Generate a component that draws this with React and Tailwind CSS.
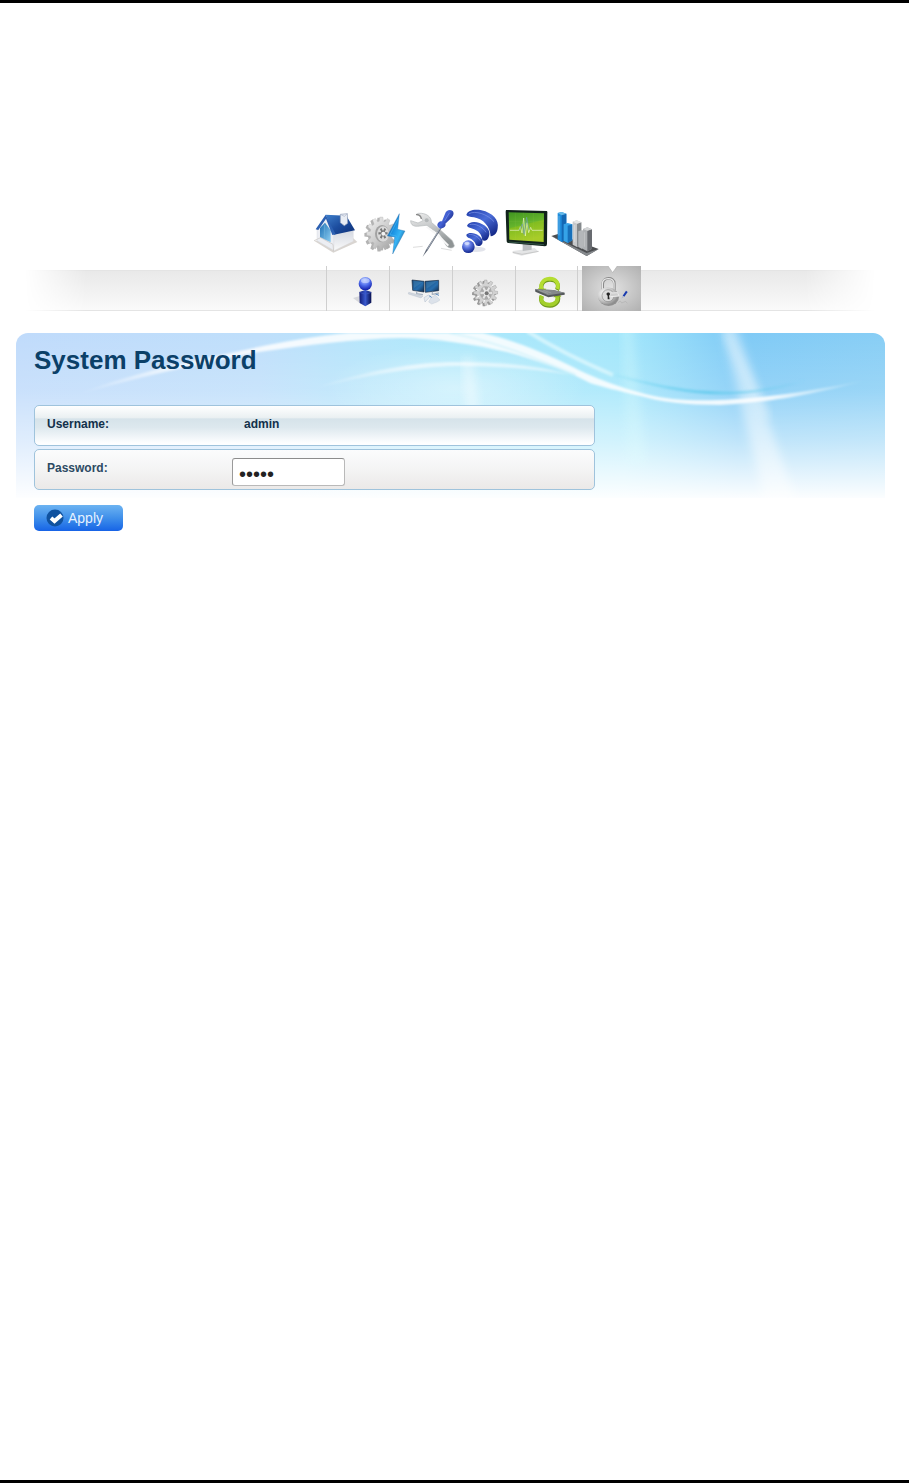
import React, { useState } from "react";

function gearPath(cx, cy, rx, ry, teeth, depth) {
  const points = [];
  for (let i = 0; i < teeth; i++) {
    const step = (Math.PI * 2) / teeth;
    [
      [-0.36, depth],
      [-0.2, 1],
      [0.2, 1],
      [0.36, depth],
    ].forEach(([offset, r]) => {
      const a = (i + offset) * step;
      points.push(`${(cx + Math.cos(a) * rx * r).toFixed(1)} ${(cy + Math.sin(a) * ry * r).toFixed(1)}`);
    });
  }
  return `M${points.join("L")}Z`;
}

function HomeIcon() {
  return (
    <svg viewBox="18 15 144 165" className="h-[55px] w-12" aria-hidden="true">
      <defs>
        <linearGradient id="roof" x1="0" y1="0" x2="1" y2="1">
          <stop offset="0" stopColor="#3f7fcb" />
          <stop offset="0.5" stopColor="#1c4d9f" />
          <stop offset="1" stopColor="#0e2f75" />
        </linearGradient>
        <linearGradient id="door" x1="0" y1="0" x2="1" y2="1">
          <stop offset="0" stopColor="#1c6fb4" />
          <stop offset="1" stopColor="#8fcff2" />
        </linearGradient>
        <linearGradient id="wall" x1="0" y1="0" x2="0" y2="1">
          <stop offset="0" stopColor="#d5d9e2" />
          <stop offset="1" stopColor="#fafafa" />
        </linearGradient>
      </defs>
      <path d="M27 122L85 158L157 126L145 115Z" fill="#d9d5d1" />
      <path d="M36 84L62 52L88 100V152L36 122Z" fill="#eceef3" stroke="#cfd3dc" />
      <path d="M86 100L145 92V124L87 152Z" fill="url(#wall)" stroke="#d4d4da" />
      <path d="M45 84L60 68L77 91V127L45 112Z" fill="url(#door)" />
      <path d="M59 74V118" stroke="#6fb3dd" strokeWidth="2" />
      <path d="M27 122L47 113L84 133L86 154" fill="none" stroke="#c9c4c1" strokeWidth="2" />
      <path d="M62 44L124 47L150 91L87 104Z" fill="url(#roof)" />
      <path d="M62 44L32 88L40 90L63 56L82 105L92 103Z" fill="#2c60b2" />
      <path d="M106 43L127 41L128 70L118 77L106 68Z" fill="#e9edf4" stroke="#8e9bb5" strokeWidth="2" />
      <path d="M106 43L118 49L127 41" fill="none" stroke="#a7b1c5" strokeWidth="2" />
    </svg>
  );
}

function SetupIcon() {
  return (
    <svg viewBox="162 15 144 165" className="h-[55px] w-12" aria-hidden="true">
      <defs>
        <linearGradient id="steel" x1="0" y1="0" x2="1" y2="1">
          <stop offset="0" stopColor="#f3f3f3" />
          <stop offset="0.5" stopColor="#cdcdcd" />
          <stop offset="1" stopColor="#989898" />
        </linearGradient>
        <linearGradient id="bolt" x1="0" y1="0" x2="1" y2="1">
          <stop offset="0" stopColor="#163f78" />
          <stop offset="0.4" stopColor="#1c94e4" />
          <stop offset="0.6" stopColor="#35b4f5" />
          <stop offset="1" stopColor="#143363" />
        </linearGradient>
      </defs>
      <path d={gearPath(222, 104, 44, 51, 12, 0.76)} fill="#b3b3b3" />
      <path d={gearPath(229, 101, 44, 50, 12, 0.76)} fill="url(#steel)" stroke="#b0b0b0" />
      <ellipse cx="231" cy="101" rx="21" ry="26" fill="#a2a2a2" />
      <ellipse cx="234" cy="102" rx="18" ry="23" fill="#dadada" />
      <path d={gearPath(234, 100, 14, 17, 6, 0.5)} fill="#777" />
      <circle cx="235" cy="101" r="6" fill="#f3f3f3" />
      <path d="M283 41L247 108L269 111L263 162L300 93L278 88Z" fill="url(#bolt)" stroke="#246ba6" />
      <path d="M280 56L255 104L274 108L269 138" fill="none" stroke="#45b3f3" strokeWidth="2" />
    </svg>
  );
}

function ToolsIcon() {
  return (
    <svg viewBox="306 15 144 165" className="h-[55px] w-12" aria-hidden="true">
      <defs>
        <linearGradient id="wrench" x1="0" y1="0" x2="0.4" y2="1">
          <stop offset="0" stopColor="#eee" />
          <stop offset="0.5" stopColor="#c4c7c8" />
          <stop offset="1" stopColor="#8f9495" />
        </linearGradient>
        <linearGradient id="grip" x1="0" y1="0" x2="1" y2="0.7">
          <stop offset="0" stopColor="#15268d" />
          <stop offset="0.5" stopColor="#4564d8" />
          <stop offset="1" stopColor="#142278" />
        </linearGradient>
      </defs>
      <path d="M324 142L353 139M408 145L440 151" stroke="#ddd" strokeWidth="3" />
      <path d="M317 62C317 76 327 81 345 78L364 76L404 103L424 137C434 147 446 145 448 137L442 122L407 91L379 67C380 51 364 38 340 40L334 43L347 50L354 62L339 69Z" fill="url(#wrench)" stroke="#b4b8b9" strokeWidth="2" />
      <path d="M333 44C342 43 348 49 349 57" fill="none" stroke="#888" strokeWidth="4" />
      <circle cx="365" cy="61" r="6" fill="#b3b7b8" />
      <path d="M365 80L402 109L430 137" fill="none" stroke="#f7f7f7" strokeWidth="6" />
      <path d="M407 80L364 148L353 170L367 152L411 82Z" fill="#5c6574" />
      <path d="M407 82L366 149" stroke="#c7cfda" strokeWidth="2" />
      <path d="M397 74C399 66 405 62 411 64L420 42C423 31 434 27 442 32C449 38 445 48 438 55L421 71C424 77 418 82 413 84C406 88 396 82 397 74Z" fill="url(#grip)" />
      <path d="M419 62L434 38" stroke="#7d93ea" strokeWidth="2" />
    </svg>
  );
}

function WirelessIcon() {
  return (
    <svg viewBox="15 15 144 165" className="h-[55px] w-12" aria-hidden="true">
      <defs>
        <linearGradient id="wave" x1="0" y1="0" x2="0.8" y2="1">
          <stop offset="0" stopColor="#203da9" />
          <stop offset="0.5" stopColor="#4a6cd8" />
          <stop offset="1" stopColor="#142887" />
        </linearGradient>
        <radialGradient id="ball" cx="0.4" cy="0.3" r="0.7">
          <stop offset="0" stopColor="#bdcaff" />
          <stop offset="0.45" stopColor="#5a73df" />
          <stop offset="1" stopColor="#12278e" />
        </radialGradient>
      </defs>
      <ellipse cx="79" cy="148" rx="28" ry="8" fill="#e2e4eb" />
      <path d="M49 45C53 31 73 27 94 31C128 38 148 61 143 84C142 97 136 107 122 109C120 79 100 57 72 52C60 50 53 50 49 45Z" fill="url(#wave)" />
      <path d="M51 77C56 65 74 63 89 69C112 77 124 96 116 111C113 120 107 124 97 121C96 103 85 91 68 86C59 83 53 82 51 77Z" fill="url(#wave)" />
      <path d="M49 104C55 96 74 97 87 107C99 116 102 130 91 137C83 140 78 137 77 133C74 125 67 119 59 115C52 112 49 109 49 104Z" fill="url(#wave)" />
      <path d="M57 41C76 31 112 42 132 65M59 74C75 69 98 80 108 97M56 104C70 101 86 111 91 122" fill="none" stroke="#7d96ea" strokeWidth="2" />
      <circle cx="55" cy="140" r="19" fill="url(#ball)" />
      <ellipse cx="51" cy="130" rx="8" ry="5" fill="#e1e8ff" opacity="0.7" />
    </svg>
  );
}

function MonitorIcon() {
  return (
    <svg viewBox="159 15 144 165" className="h-[55px] w-12" aria-hidden="true">
      <defs>
        <linearGradient id="screen" x1="0" y1="0" x2="0.3" y2="1">
          <stop offset="0" stopColor="#409521" />
          <stop offset="0.48" stopColor="#65b42c" />
          <stop offset="0.52" stopColor="#82bd20" />
          <stop offset="1" stopColor="#a8cc29" />
        </linearGradient>
      </defs>
      <path d="M188 153L254 144L266 155L215 167L188 160Z" fill="#e4e5e6" />
      <path d="M188 157L216 163L266 154" fill="none" stroke="#b9b9b9" strokeWidth="2" />
      <path d="M218 130L245 134V149L218 153Z" fill="#bbbec0" />
      <path d="M168 30L290 33Q293 34 292 39L291 132Q291 139 285 139L175 129Q170 129 170 124L167 35Z" fill="#11221b" />
      <path d="M176 37L282 40L281 126L178 119Z" fill="url(#screen)" />
      <path d="M177 64H281M177 88H280M196 38V120M221 38V122M250 39V124" stroke="#b9de66" opacity="0.25" />
      <path d="M180 91H207L211 80L216 99L221 54L226 108L231 68L236 98L242 82L246 91H278" fill="none" stroke="#e8f3c4" strokeWidth="2" />
      <path d="M208 91L217 72L222 103L230 52L237 90" fill="none" stroke="#6e9fae" strokeWidth="2" />
      <path d="M176 126L282 134" stroke="#456f5d" strokeWidth="2" />
    </svg>
  );
}

function ChartIcon() {
  return (
    <svg viewBox="303 15 144 165" className="h-[55px] w-12" aria-hidden="true">
      <path d="M304 108L324 102L446 147L410 168Z" fill="#4c4e51" />
      <path d="M304 108L410 159L446 147L410 168Z" fill="#85898d" />
      <path d="M323 39L335 36L349 41V119L335 126L323 118Z" fill="#1f8ddc" />
      <path d="M335 44L349 41V119L335 126Z" fill="#1368b4" />
      <path d="M323 39L335 36L349 41L335 46Z" fill="#65b9e9" />
      <path d="M341 73L353 69L367 73V121L353 129L341 123Z" fill="#35a3e8" />
      <path d="M353 77L367 73V121L353 129Z" fill="#1770ba" />
      <path d="M368 65L380 61L394 67V134L381 141L368 134Z" fill="#c6c8ca" />
      <path d="M381 71L394 67V134L381 141Z" fill="#85898c" />
      <path d="M368 65L380 61L394 67L381 71Z" fill="#e5e5e5" />
      <path d="M385 94L396 90L406 96V141L396 147L385 141Z" fill="#b4b7ba" />
      <path d="M399 87L412 82L426 88V146L412 154L399 147Z" fill="#aeb1b4" />
      <path d="M412 92L426 88V146L412 154Z" fill="#686b70" />
      <path d="M399 87L412 82L426 88L412 92Z" fill="#d4d6d7" />
      <path d="M327 48V106M374 75V126M403 97V140" stroke="#fff" strokeWidth="2" opacity="0.4" />
    </svg>
  );
}

function InfoIcon() {
  return (
    <svg viewBox="21 18 186 135" className="h-[45px] w-full" aria-hidden="true">
      <defs>
        <radialGradient id="head" cx="0.45" cy="0.25" r="0.75">
          <stop offset="0" stopColor="#c4d2ff" />
          <stop offset="0.5" stopColor="#5270ee" />
          <stop offset="1" stopColor="#101da8" />
        </radialGradient>
        <linearGradient id="body" x1="0" y1="0" x2="1" y2="0">
          <stop offset="0" stopColor="#111b74" />
          <stop offset="0.5" stopColor="#3759cf" />
          <stop offset="1" stopColor="#08104e" />
        </linearGradient>
      </defs>
      <path d="M99 114L122 107V131Z" fill="#d6d7db" />
      <path d="M118 96L136 90L154 96V128L136 139L119 129Z" fill="url(#body)" />
      <path d="M119 97L136 103L154 97M136 103V138" fill="none" stroke="#3f5cc8" strokeWidth="2" />
      <circle cx="136" cy="71" r="20" fill="url(#head)" />
      <ellipse cx="136" cy="62" rx="13" ry="7" fill="#c7d6ff" opacity="0.65" />
    </svg>
  );
}

function NetworkIcon() {
  return (
    <svg viewBox="210 18 186 135" className="h-[45px] w-full" aria-hidden="true">
      <defs>
        <linearGradient id="display" x1="0" y1="0" x2="1" y2="1">
          <stop offset="0" stopColor="#174779" />
          <stop offset="0.6" stopColor="#276eae" />
          <stop offset="1" stopColor="#102849" />
        </linearGradient>
      </defs>
      <path d="M276 60L312 64V96L278 91Z" fill="url(#display)" stroke="#1a2a40" strokeWidth="2" />
      <path d="M315 64L356 61V92L316 97Z" fill="url(#display)" stroke="#1a2a40" strokeWidth="2" />
      <path d="M280 62L308 66L282 84ZM318 66L352 63L320 86Z" fill="#4b8ebd" opacity="0.4" />
      <path d="M290 94V101L309 104M337 95V103L357 99" fill="none" stroke="#aab5c2" strokeWidth="4" />
      <path d="M266 97L309 108L303 114L265 102Z" fill="#d1d7df" stroke="#afb8c5" />
      <path d="M312 113L325 105L332 108L315 126Z" fill="#e7ebef" stroke="#91a2b8" />
      <path d="M333 113L346 105L360 120L351 126L335 132L326 126Z" fill="#dce2ea" stroke="#b3c0cc" />
      <path d="M328 108L335 112M347 102L357 106" stroke="#5489c1" strokeWidth="3" />
    </svg>
  );
}

function GearIcon() {
  return (
    <svg viewBox="-81 18 186 135" className="h-[45px] w-full" aria-hidden="true">
      <path d={gearPath(12, 101, 36, 38, 12, 0.75)} fill="#999" />
      <path d={gearPath(17, 98, 36, 38, 12, 0.75)} fill="#d2d2d2" stroke="#858585" />
      <ellipse cx="18" cy="99" rx="18" ry="20" fill="#aaa" />
      <path d={gearPath(19, 99, 19, 20, 6, 0.5)} fill="#e7e7e7" stroke="#888" />
      <circle cx="20" cy="100" r="6" fill="#777" />
      <path d="M-12 88L-5 91M0 70L5 76M38 75L33 80M-10 112L-2 108M11 129L13 120M36 124L31 116" stroke="#fff" strokeWidth="3" />
    </svg>
  );
}

function UpdateIcon() {
  return (
    <svg viewBox="105 18 186 135" className="h-[45px] w-full" aria-hidden="true">
      <path d="M186 97C174 76 186 59 207 59C228 59 236 75 228 90" fill="none" stroke="#6f981a" strokeWidth="12" />
      <path d="M184 93C174 73 186 57 206 56C226 56 235 71 229 87" fill="none" stroke="#b4dd31" strokeWidth="11" />
      <path d="M171 84L196 86L184 104Z" fill="#a5d02a" />
      <path d="M182 108C176 126 188 137 207 137C226 136 236 122 229 105" fill="none" stroke="#6f981a" strokeWidth="13" />
      <path d="M182 107C176 124 187 134 206 134C225 133 233 120 228 106" fill="none" stroke="#a3cf2b" strokeWidth="11" />
      <path d="M217 112L241 110L230 94Z" fill="#93be20" />
      <path d="M162 88L216 90L251 98V104L202 112L163 95Z" fill="#55595b" />
      <path d="M162 88L216 90L251 98L201 106Z" fill="#85898b" />
      <path d="M174 91L201 100M187 91L211 99" stroke="#a5a8a9" strokeWidth="2" />
    </svg>
  );
}

function PasswordIcon() {
  return (
    <svg viewBox="306 18 177 135" className="h-[45px] w-full" aria-hidden="true">
      <defs>
        <radialGradient id="lock" cx="0.35" cy="0.35" r="0.8">
          <stop offset="0" stopColor="#fff" />
          <stop offset="0.55" stopColor="#c4c4c4" />
          <stop offset="1" stopColor="#777" />
        </radialGradient>
      </defs>
      <path d="M384 18H412L398 38Z" fill="#fff" />
      <path d="M384 18L398 38L412 18" fill="none" stroke="#aaa" strokeWidth="2" />
      <path d="M368 94V72C369 50 402 50 403 70V90" fill="none" stroke="#8a8a8a" strokeWidth="8" />
      <path d="M367 94V71C368 51 400 51 402 69V90" fill="none" stroke="#e7e7e7" strokeWidth="4" />
      <ellipse cx="386" cy="111" rx="31" ry="27" fill="#909090" />
      <ellipse cx="383" cy="108" rx="30" ry="26" fill="url(#lock)" />
      <ellipse cx="384" cy="107" rx="18" ry="18" fill="#dcdcdc" stroke="#888" strokeWidth="2" />
      <path d="M382 98C389 95 393 103 387 107L389 118H383V107C379 104 378 100 382 98Z" fill="#242424" />
      <path d="M394 99L413 98L417 108L391 110" fill="#cfcfcf" stroke="#eee" strokeWidth="3" />
      <path d="M428 107L438 92L443 96L433 110Z" fill="#183aaf" />
      <path d="M428 107L424 116L433 110" fill="#adb7cd" />
      <path d="M414 128L421 123L425 129L437 124L442 130" fill="none" stroke="#b0b0b0" strokeWidth="2" />
    </svg>
  );
}

function BannerArt() {
  return (
    <svg viewBox="0 0 869 165" preserveAspectRatio="none" className="absolute inset-x-0 top-0 h-[165px] w-full rounded-t-xl" aria-hidden="true">
      <defs>
        <linearGradient id="sky" x1="0" x2="1" y1="0" y2="0">
          <stop offset="0" stopColor="#c0dbfb" />
          <stop offset="0.28" stopColor="#bfdffb" />
          <stop offset="0.42" stopColor="#b4e6fb" />
          <stop offset="0.5" stopColor="#aee8fb" />
          <stop offset="0.7" stopColor="#a2e6fb" />
          <stop offset="0.76" stopColor="#92daf9" />
          <stop offset="0.83" stopColor="#7fcaf6" />
          <stop offset="1" stopColor="#88cef5" />
        </linearGradient>
        <linearGradient id="fade" x1="0" x2="0" y1="0" y2="1">
          <stop offset="0" stopColor="#fff" stopOpacity="0" />
          <stop offset="0.35" stopColor="#fff" stopOpacity="0.16" />
          <stop offset="0.65" stopColor="#fff" stopOpacity="0.5" />
          <stop offset="1" stopColor="#fff" stopOpacity="0.97" />
        </linearGradient>
        <linearGradient id="ribbon" gradientUnits="userSpaceOnUse" x1="60" x2="850" y1="0" y2="0">
          <stop offset="0" stopColor="#fff" stopOpacity="0" />
          <stop offset="0.12" stopColor="#fff" stopOpacity="0.7" />
          <stop offset="0.25" stopColor="#fff" stopOpacity="0.85" />
          <stop offset="0.88" stopColor="#fff" stopOpacity="0.85" />
          <stop offset="1" stopColor="#fff" stopOpacity="0" />
        </linearGradient>
        <linearGradient id="arc" gradientUnits="userSpaceOnUse" x1="290" x2="560" y1="0" y2="0">
          <stop offset="0" stopColor="#fff" stopOpacity="0" />
          <stop offset="0.4" stopColor="#fff" stopOpacity="0.6" />
          <stop offset="1" stopColor="#fff" stopOpacity="0.5" />
        </linearGradient>
        <linearGradient id="shade" gradientUnits="userSpaceOnUse" x1="590" x2="790" y1="0" y2="0">
          <stop offset="0" stopColor="#60d1ee" stopOpacity="0" />
          <stop offset="0.5" stopColor="#62cbed" stopOpacity="0.8" />
          <stop offset="1" stopColor="#62cbed" stopOpacity="0" />
        </linearGradient>
        <linearGradient id="ray" gradientUnits="userSpaceOnUse" x1="0" x2="0" y1="0" y2="165">
          <stop offset="0" stopColor="#fff" stopOpacity="0.4" />
          <stop offset="1" stopColor="#fff" stopOpacity="0.5" />
        </linearGradient>
        <radialGradient id="glow">
          <stop offset="0" stopColor="#fff" stopOpacity="0.4" />
          <stop offset="1" stopColor="#fff" stopOpacity="0" />
        </radialGradient>
        <filter id="soft">
          <feGaussianBlur stdDeviation="5" />
        </filter>
        <filter id="edge" x="-5%" y="-20%" width="110%" height="140%">
          <feGaussianBlur stdDeviation="0.8" />
        </filter>
      </defs>
      <path d="M0 0H869V165H0Z" fill="url(#sky)" />
      <path d="M0 0H869V165H0Z" fill="url(#fade)" />
      <ellipse cx="440" cy="55" rx="130" ry="45" fill="url(#glow)" />
      <path d="M446 25H456L466 100H452Z" fill="#fff" opacity="0.4" filter="url(#soft)" />
      <path d="M606 -10H616L630 130H612Z" fill="#e4fffd" opacity="0.25" filter="url(#soft)" />
      <path d="M704 -12H718L784 180H752Z" fill="url(#ray)" filter="url(#soft)" />
      <path d="M710 0L752 85" stroke="#fff" strokeWidth="6" opacity="0.35" filter="url(#soft)" />
      <g filter="url(#edge)">
        <path
          d="M60 62C110 42 160 31 210 21C250 12 290 4 333 0H467C500 8 528 20 557 34C590 51 630 63 657 66C700 70 765 65 855 46C790 64 750 69 704 72C670 72 645 69 624 63C600 57 590 55 574 50C550 37 520 27 491 19C460 12 420 5 383 5C340 6 290 12 243 19C180 31 115 46 60 62Z"
          fill="url(#ribbon)"
        />
        <path d="M433 0C480 8 520 26 560 42" fill="none" stroke="#d3f2fb" strokeWidth="2" opacity="0.8" />
        <path d="M511 -2C530 10 555 24 597 42" fill="none" stroke="#e2fafd" strokeWidth="4" opacity="0.7" />
        <path d="M293 57C350 37 400 29 440 29C490 29 525 33 555 42C520 36 480 33 440 33C400 34 350 42 293 57Z" fill="url(#arc)" />
        <path d="M590 40C630 50 665 60 707 60C740 60 765 55 790 47" fill="none" stroke="url(#shade)" strokeWidth="3" />
      </g>
    </svg>
  );
}

const sections = [
  ["Home", HomeIcon],
  ["Setup", SetupIcon],
  ["Tools", ToolsIcon],
  ["Wireless", WirelessIcon],
  ["Monitor", MonitorIcon],
  ["Statistics", ChartIcon],
];

const pages = [
  ["Information", InfoIcon],
  ["Network", NetworkIcon],
  ["Settings", GearIcon],
  ["Firmware", UpdateIcon],
];

export default function App() {
  const [password, setPassword] = useState("admin");
  return (
    <div className="min-h-screen border-y-3 border-black bg-white pt-[202px] font-['Liberation_Sans',Arial,sans-serif]">
      <nav aria-label="Sections" className="flex justify-center">
        {sections.map(([name, Icon]) => (
          <a key={name} href="#" aria-label={name}>
            <Icon />
          </a>
        ))}
      </nav>

      <nav aria-label="System pages" className="relative mx-4 mt-[6px] flex justify-center pl-[58px]">
        <div className="absolute inset-x-0 top-1 bottom-0 border-y border-[#e4e4e4] bg-linear-to-b from-[#e9e9e9] via-[#f1f1f1] to-[#fafafa] [mask-image:linear-gradient(to_right,transparent_1%,black_8%,black_90%,transparent_98%)]" />
        {pages.map(([name, Icon]) => (
          <a key={name} href="#" aria-label={name} className="relative w-[63px] border-l border-[#cfcfcf]">
            <Icon />
          </a>
        ))}
        <a
          href="#"
          aria-label="Password"
          aria-current="page"
          className="relative ml-1 w-[59px] bg-radial from-[#e2e2e2] to-[#b0b0b0] before:absolute before:inset-y-0 before:-left-[5px] before:w-px before:bg-[#cfcfcf]"
        >
          <span className="relative block">
            <PasswordIcon />
          </span>
        </a>
      </nav>

      <main className="relative mr-6 ml-4 mt-[22px] px-[18px] pt-[11px]">
        <BannerArt />
        <form className="relative" onSubmit={(event) => event.preventDefault()}>
          <h1 className="text-[26px] leading-8 font-bold text-[#0b4068]">System Password</h1>
          <div className="mt-[29px] flex max-w-[561px] flex-col gap-[3px] text-xs font-bold">
            <div className="flex h-[41px] rounded-[5px] border border-[#9fc3dc] bg-[linear-gradient(to_bottom,#fff_0%,#eaf0f2_30%,#d6e3ea_33%,#dde8ee_55%,#fdfeff_95%)] px-3 pt-[10px] leading-4 text-[#12304a]">
              <span className="w-[197px]">Username:</span>
              <span>admin</span>
            </div>
            <div className="flex h-[41px] rounded-[5px] border border-[#9fc3dc] bg-linear-to-b from-[#fbfcfd] via-[#f4f4f4] to-[#ebe9e8] px-3 leading-4 text-[#2c4a63]">
              <label htmlFor="password" className="w-[185px] pt-[10px]">
                Password:
              </label>
              <input
                id="password"
                type="password"
                value={password}
                onChange={(event) => setPassword(event.target.value)}
                className="mt-2 h-7 w-[113px] rounded-[3px] border border-[#b9b9b9] border-t-[#8c8c8c] border-l-[#9a9a9a] bg-white px-[6px] pt-1 text-xl font-normal text-[#222] outline-none"
              />
            </div>
          </div>
          <button
            type="submit"
            className="mt-[15px] flex h-[26px] w-[89px] items-center gap-1 rounded-[5px] bg-linear-to-b from-[#6cb3f1] via-[#3f8fea] to-[#1763e6] pl-3 text-sm text-[#e6f2ff]"
          >
            <svg viewBox="0 0 18 18" className="size-[18px]" aria-hidden="true">
              <circle cx="9" cy="9" r="8.5" fill="#10529f" />
              <path d="M5 9L8.5 12L15.5 6" fill="none" stroke="#fff" strokeWidth="4" />
            </svg>
            Apply
          </button>
        </form>
      </main>
    </div>
  );
}
